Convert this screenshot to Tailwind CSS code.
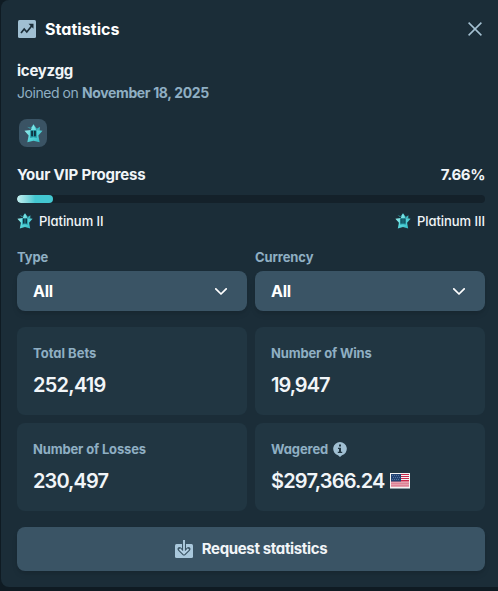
<!DOCTYPE html>
<html lang="en">
<head>
  <meta charset="UTF-8" />
  <meta name="viewport" content="width=device-width, initial-scale=1.0"/>
  <title>Statistics</title>
  <script src="https://cdn.jsdelivr.net/npm/@tailwindcss/browser@4"></script>
</head>
<body class="h-[591px] overflow-hidden bg-[#0f1b23] pl-px font-['Inter',sans-serif] text-sm font-semibold text-[#f1f5f8] [font-feature-settings:'cv11']">

  <!-- Shared shapes -->
  <svg class="absolute size-0">
    <defs>
      <linearGradient id="plat" x1="0" y1="0" x2="1" y2="1">
        <stop offset="0" stop-color="#b5f5f2"/>
        <stop offset=".5" stop-color="#5cd8dc"/>
        <stop offset="1" stop-color="#2bb5c0"/>
      </linearGradient>
      <symbol id="star" viewBox="0 0 20 20">
        <path d="M3.200 2.800 6.500 5 10 .2 13.500 5l3.300-2.200L16.500 7z" fill="#3bb9c3"/>
        <path d="M10 .5l2.900 5.700 6.600 1-4.400 5 1.400 7.100L10 17.500l-6.500 1.800 1.400-7.100L.5 7.200l6.600-1z" fill="url(#plat)"/>
        <path d="M6.500 6.500h7v8.300L10 14l-3.500.8z" fill="#259aa7"/>
      </symbol>
    </defs>
  </svg>

  <div class="h-[587px] rounded-l-lg bg-[#1b2d38] pl-4 pr-[13px]">

    <!-- Header -->
    <div class="flex h-[58px] items-center">
      <svg class="ml-px size-[18px]" viewBox="0 0 18 18" fill="none">
        <rect width="18" height="18" rx="1.500" fill="#a0bfd2"/>
        <path d="M3 13 6.200 9l2.600 3L14 5.500" stroke="#1b2d38" stroke-width="1.700"/>
        <path d="M10.500 3.800h5v5z" fill="#1b2d38"/>
      </svg>
      <h1 class="ml-[9px] text-base font-bold tracking-[0.05px] text-white">Statistics</h1>
      <svg class="ml-auto mr-[3px] size-[14px]" viewBox="0 0 14 14" fill="none" stroke="#a5c1d2" stroke-width="1.500"><path d="M.6.600l12.800 12.800M13.400.600.600 13.400"/></svg>
    </div>

    <!-- User -->
    <div class="pt-[2px]">
      <div class="text-[15px] font-bold leading-[22px] tracking-[-0.25px]">iceyzgg</div>
      <div class="text-[#8fafc3] leading-[22px]"><span class="font-normal tracking-[-0.45px]">Joined on</span> <span class="font-bold tracking-[-0.35px]">November 18, 2025</span></div>
    </div>
    <div class="ml-[2px] mt-[15px] flex size-7 items-center justify-center rounded-lg bg-[#3a5364]">
      <svg class="size-[19px]" viewBox="0 0 20 20"><use href="#star"/><path d="M7.500 7h2v6h-2zM10.500 7h2v6h-2z" fill="#0e3442"/></svg>
    </div>

    <!-- VIP progress -->
    <div class="mt-4 flex h-6 items-center justify-between text-[15px] font-bold">
      <span class="tracking-[-0.2px]">Your VIP Progress</span>
      <span class="tracking-[-0.4px]">7.66%</span>
    </div>
    <div class="mt-2 h-2 overflow-hidden rounded-full bg-[#14212a]">
      <div class="h-full rounded-full bg-linear-to-r from-[#c3f0f0] to-[#43c7d1] to-50%" style="width: 7.66%"></div>
    </div>
    <div class="mt-2 flex h-5 items-center justify-between text-[13px] font-medium">
      <div class="flex items-center gap-[6px]">
        <svg class="size-4" viewBox="0 0 20 20"><use href="#star"/><path d="M7.500 7h2v6h-2zM10.500 7h2v6h-2z" fill="#0e3442"/></svg>
        <span class="tracking-[-0.05px]">Platinum II</span>
      </div>
      <div class="flex items-center gap-[6px]">
        <svg class="size-4" viewBox="0 0 20 20"><use href="#star"/><path d="M7 7h1.300v6H7zM9.350 7h1.300v6h-1.300zM11.700 7H13v6h-1.300z" fill="#0e3442"/></svg>
        <span class="tracking-[-0.05px]">Platinum III</span>
      </div>
    </div>

    <!-- Filters -->
    <div class="mt-4 grid grid-cols-2 gap-x-2">
      <div>
        <div class="h-5 text-[13px] font-bold leading-5 tracking-[-0.1px] text-[#8fafc3]">Type</div>
        <button class="mt-1 flex h-10 w-full items-center justify-between rounded-lg bg-[#3a5465] px-4 text-base font-bold tracking-[-0.3px] text-white shadow-md">
          <span>All</span>
          <svg class="mr-1 h-[7px] w-3" viewBox="0 0 12 7" fill="none" stroke="currentColor" stroke-width="1.700" stroke-linecap="round" stroke-linejoin="round"><path d="M.8.800 6 6 11.200.8"/></svg>
        </button>
      </div>
      <div>
        <div class="h-5 text-[13px] font-bold leading-5 tracking-[-0.1px] text-[#8fafc3]">Currency</div>
        <button class="mt-1 flex h-10 w-full items-center justify-between rounded-lg bg-[#3a5465] px-4 text-base font-bold tracking-[-0.3px] text-white shadow-md">
          <span>All</span>
          <svg class="mr-1 h-[7px] w-3" viewBox="0 0 12 7" fill="none" stroke="currentColor" stroke-width="1.700" stroke-linecap="round" stroke-linejoin="round"><path d="M.8.800 6 6 11.200.8"/></svg>
        </button>
      </div>
    </div>

    <!-- Stats -->
    <div class="mt-4 grid grid-cols-2 gap-2">
      <div class="h-[88px] rounded-lg bg-[#213642] px-4 pt-4">
        <div class="h-5 text-[13px] font-bold leading-5 tracking-[0px] text-[#8fafc3]">Total Bets</div>
        <div class="mt-2 text-xl leading-7 tracking-[-0.75px]">252,419</div>
      </div>
      <div class="h-[88px] rounded-lg bg-[#213642] px-4 pt-4">
        <div class="h-5 text-[13px] font-bold leading-5 tracking-[-0.150px] text-[#8fafc3]">Number of Wins</div>
        <div class="mt-2 text-xl leading-7 tracking-[-1px]">19,947</div>
      </div>
      <div class="h-[88px] rounded-lg bg-[#213642] px-4 pt-4">
        <div class="h-5 text-[13px] font-bold leading-5 tracking-[-0.150px] text-[#8fafc3]">Number of Losses</div>
        <div class="mt-2 text-xl leading-7 tracking-[-0.9px]">230,497</div>
      </div>
      <div class="h-[88px] rounded-lg bg-[#213642] px-4 pt-4">
        <div class="flex h-5 items-center gap-[5px] text-[13px] font-bold leading-5 text-[#8fafc3]">
          <span class="tracking-[-0.1px]">Wagered</span>
          <svg class="h-[15px] w-[14px]" viewBox="0 0 14 15"><path d="M7 0a6.800 6.800 0 0 1 2 13.300L7 15l-2-1.700A6.800 6.800 0 0 1 7 0z" fill="#a0bfd2"/><path d="M6 2.500h2v2H6zM5 5.700h3v4h1.200V11H4.800V9.700H6V7H5z" fill="#213642"/></svg>
        </div>
        <div class="mt-2 flex items-center gap-[5px] text-xl leading-7">
          <span class="tracking-[-0.8px]">$297,366.24</span>
          <svg class="h-4 w-5" viewBox="0 0 20 16">
            <rect width="20" height="16" fill="#f3f3f3"/>
            <path d="M1 1.500h18M1 3.500h18M1 5.500h18M1 7.500h18" stroke="#c9284c"/>
            <path d="M1 8h18v6H1z" fill="#de8296"/>
            <path d="M1 9.500h18M1 11.500h18M1 13.500h18" stroke="#e9b2be" stroke-width=".6"/>
            <path d="M1 1h10v7.500H1z" fill="#214273"/>
            <path d="M2 2.500h8M3 4.500h7M2 6.500h8" stroke="#6482aa" stroke-width=".8" stroke-dasharray="1 1"/>
            <path d="M0 15.500h20" stroke="#8d9aa2"/>
          </svg>
        </div>
      </div>
    </div>

    <!-- Request -->
    <button class="mt-4 flex h-11 w-full items-center justify-center rounded-lg bg-[#3a5465] shadow-md">
      <svg class="h-[18px] w-[18px]" viewBox="0 0 18 18" fill="none">
        <rect y="4" width="18" height="14" rx="1.500" fill="#a9c8dc"/>
        <path d="M9 4v9M4.500 9 9 13.500 13.500 9" stroke="#3a5465" stroke-width="4" stroke-linejoin="round" stroke-linecap="round"/>
        <path d="M9 0v13M4.500 9 9 13.500 13.500 9" stroke="#b4d1e4" stroke-width="1.800"/>
      </svg>
      <span class="ml-[9px] text-[15px] font-bold tracking-[-0.350px]">Request statistics</span>
    </button>
  </div>

</body>
</html>
